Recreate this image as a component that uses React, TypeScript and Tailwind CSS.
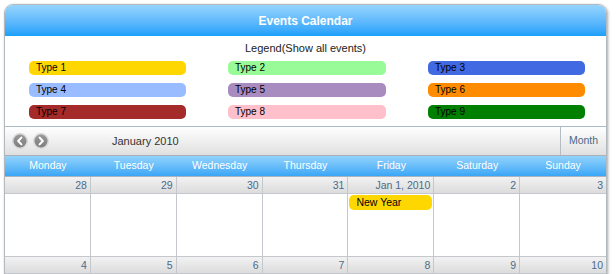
import React from 'react';

const legend = [
  { label: 'Type 1', color: 'bg-[#ffd700]' },
  { label: 'Type 2', color: 'bg-[#98fb98]' },
  { label: 'Type 3', color: 'bg-[#4169e1]' },
  { label: 'Type 4', color: 'bg-[#99bbff]' },
  { label: 'Type 5', color: 'bg-[#a88cc0]' },
  { label: 'Type 6', color: 'bg-[#ff8c00]' },
  { label: 'Type 7', color: 'bg-[#a52a2a]' },
  { label: 'Type 8', color: 'bg-[#ffc0cb]' },
  { label: 'Type 9', color: 'bg-[#008000]' },
];

const days = ['Monday', 'Tuesday', 'Wednesday', 'Thursday', 'Friday', 'Saturday', 'Sunday'];

const weeks = [
  ['28', '29', '30', '31', 'Jan 1, 2010', '2', '3'],
  ['4', '5', '6', '7', '8', '9', '10'],
];

const NavButton: React.FC<{ dir: 'prev' | 'next' }> = ({ dir }) => (
  <svg width="16" height="16" viewBox="0 0 16 16">
    <defs>
      <linearGradient id={`g-${dir}`} x1="0" y1="0" x2="0" y2="1">
        <stop offset="0" stopColor="#9a9a9a" />
        <stop offset="1" stopColor="#7c7c7c" />
      </linearGradient>
    </defs>
    <circle cx="8" cy="8" r="7.2" fill={`url(#g-${dir})`} stroke="#d6d6d6" strokeWidth="1.4" />
    {dir === 'prev' ? (
      <path d="M9.4 4.6 L6.2 8 L9.4 11.4" fill="none" stroke="#fff" strokeWidth="2.1" strokeLinecap="round" strokeLinejoin="round" />
    ) : (
      <path d="M6.6 4.6 L9.8 8 L6.6 11.4" fill="none" stroke="#fff" strokeWidth="2.1" strokeLinecap="round" strokeLinejoin="round" />
    )}
  </svg>
);

const App: React.FC = () => {
  return (
    <div className="w-[616px] h-[274px] overflow-hidden bg-white font-['Liberation_Sans',Arial,sans-serif]">
      <div className="ml-[4px] mt-[4px] w-[603px] border border-[#b4b9be] rounded-t-[9px] shadow-[1px_1px_3px_rgba(0,0,0,0.35)] bg-white">
        {/* Title bar */}
        <div className="h-[31px] rounded-t-[8px] bg-gradient-to-b from-[#95d4fd] to-[#16a0fa] flex items-center justify-center text-white font-bold text-[12px]">
          Events Calendar
        </div>

        {/* Legend */}
        <div className="pt-[5px] pb-[7px] border-b border-[#a8bcc8]">
          <div className="h-[14px] leading-[14px] text-center text-[11px] text-[#222]">Legend(Show all events)</div>
          <div className="mt-[6px] pl-[24px] grid grid-cols-[157px_158px_157px] gap-x-[42px] gap-y-[8px]">
            {legend.map((l) => (
              <div key={l.label} className={`h-[14px] rounded-[5px] ${l.color} pl-[7px] text-[10px] leading-[14px] text-black`}>
                {l.label}
              </div>
            ))}
          </div>
        </div>

        {/* Toolbar */}
        <div className="h-[29px] flex items-stretch bg-gradient-to-b from-white to-[#e0e0e0] border-b border-[#a9b0b8]">
          <div className="flex items-center gap-[5px] pl-[7px]">
            <NavButton dir="prev" />
            <NavButton dir="next" />
          </div>
          <div className="flex items-center pl-[63px] text-[11px] text-[#333]">January 2010</div>
          <div className="flex-1" />
          <div className="w-[46px] border-l border-[#b4bcc4] flex items-center justify-center text-[10.5px] text-[#4a6a86]">
            Month
          </div>
        </div>

        {/* Day names */}
        <div className="h-[21px] grid grid-cols-7 bg-gradient-to-b from-[#92d3fc] to-[#38a6f6] border-b border-[#a8b4c0]">
          {days.map((d) => (
            <div key={d} className="flex items-center justify-center text-white text-[10.5px]">
              {d}
            </div>
          ))}
        </div>

        {/* Weeks */}
        {weeks.map((week, wi) => (
          <div key={wi} className="grid grid-cols-7">
            {week.map((date, di) => (
              <div key={date} className={`flex flex-col ${di < 6 ? 'border-r border-[#c4c8cc]' : ''}`}>
                <div className="h-[17px] border-b border-[#c4c8cc] bg-gradient-to-b from-[#f2f2f2] to-[#dcdcdc] text-right pr-[3px] text-[10.5px] leading-[16px] text-[#4b6b8b]">
                  {date}
                </div>
                <div className="h-[63px] border-b border-[#c4c8cc] pt-[1px] px-[1px]">
                  {wi === 0 && di === 4 && (
                    <div className="h-[15px] rounded-[5px] bg-[#ffd700] pl-[7px] text-[10.5px] leading-[15px] text-black">
                      New Year
                    </div>
                  )}
                </div>
              </div>
            ))}
          </div>
        ))}
      </div>
    </div>
  );
};

export default App;
